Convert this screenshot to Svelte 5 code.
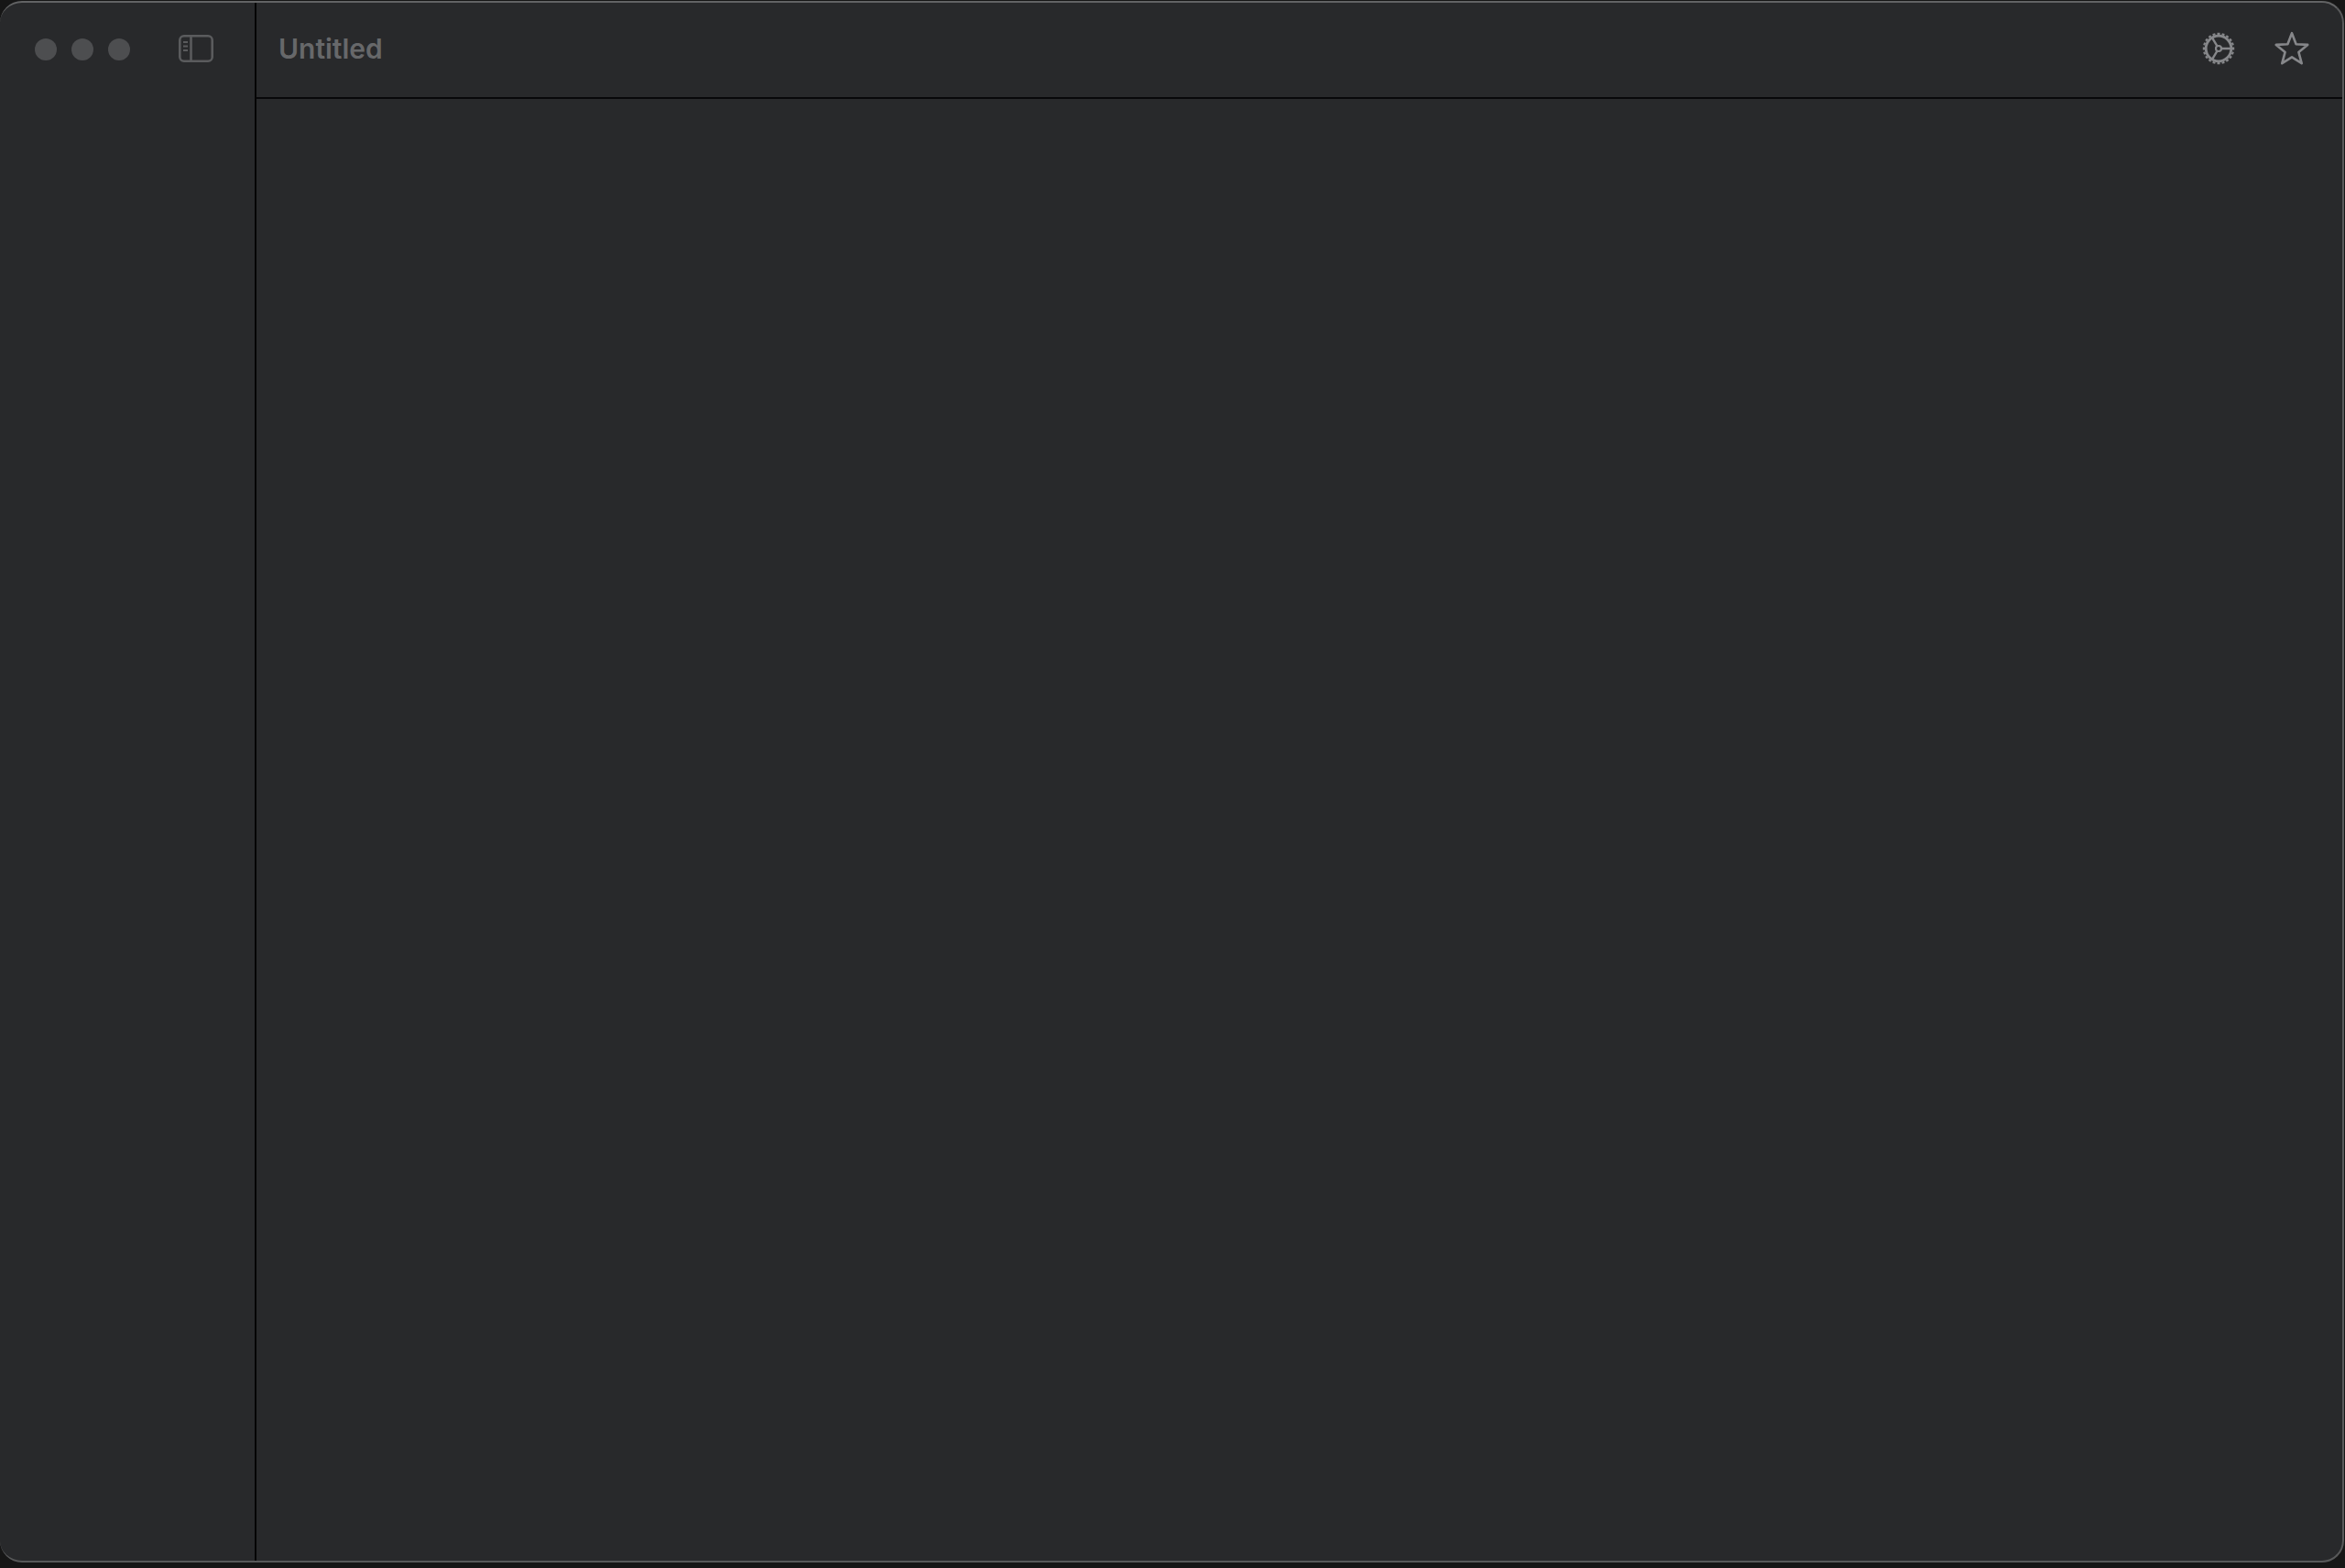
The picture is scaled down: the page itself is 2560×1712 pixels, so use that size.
<script lang="ts">
	const teeth = Array.from({ length: 20 }, (_, i) => i * 18);
</script>

<div class="window">
	<aside class="sidebar">
		<div class="lights">
			<span class="light"></span>
			<span class="light"></span>
			<span class="light"></span>
		</div>
		<svg class="toggle" width="38" height="30" viewBox="0 0 38 30" fill="none" stroke="#5a5b5d" aria-label="Toggle sidebar">
			<rect x="1.3" y="1.3" width="35.4" height="27.4" rx="4.5" stroke-width="2.6" />
			<path d="M13.5 2v26" stroke-width="2.6" />
			<path d="M5 8h5M5 12.5h5M5 17h5" stroke-width="2" />
		</svg>
	</aside>
	<main class="content">
		<header class="titlebar">
			<span class="title">Untitled</span>
			<div class="actions">
				<svg width="38" height="38" viewBox="0 0 38 38" fill="none" stroke="#86878a" aria-label="Settings">
					<circle cx="19" cy="19" r="13.8" stroke-width="2.8" />
					{#each teeth as angle}
						<path d="M19 4V1.8" stroke-width="3" transform="rotate({angle} 19 19)" />
					{/each}
					<circle cx="19" cy="19" r="3" stroke-width="2.2" />
					<path d="M22 19H33M17.5 16.4 11.6 6.6M17.5 21.6 11.6 31.4" stroke-width="2.4" />
				</svg>
				<svg width="38" height="38" viewBox="0 0 38 38" fill="none" stroke="#86878a" stroke-width="2.6" stroke-linejoin="round" aria-label="Favorite">
					<path d="M19 2.2 23.6 14.2 36.2 14.9 26.4 22.9 29.7 35.2 19 28.3 8.3 35.2 11.6 22.9 1.8 14.9 14.4 14.2Z" />
				</svg>
			</div>
		</header>
		<div class="body"></div>
	</main>
</div>

<style>
	:global(body) {
		margin: 0;
		background: #161616;
	}

	.window {
		box-sizing: border-box;
		display: flex;
		width: 2559px;
		height: 1705px;
		margin-top: 1px;
		overflow: hidden;
		background: #28292b;
		border-style: solid;
		border-color: #626364 #58595a #58595a;
		border-width: 2px 2px 2px 0;
		border-radius: 24px;
	}

	.sidebar {
		box-sizing: border-box;
		display: flex;
		flex: none;
		align-items: flex-start;
		width: 278px;
		height: 100%;
		padding: 35px 0 0 38px;
	}

	.lights {
		display: flex;
		gap: 16px;
		margin-top: 4px;
	}

	.light {
		width: 24px;
		height: 24px;
		border-radius: 50%;
		background: #4d4e50;
	}

	.toggle {
		margin-left: 53px;
	}

	.content {
		display: flex;
		flex: 1;
		flex-direction: column;
		min-width: 0;
		border-left: 2px solid #050505;
	}

	.titlebar {
		box-sizing: border-box;
		display: flex;
		flex: none;
		align-items: center;
		justify-content: space-between;
		height: 105px;
		padding: 0 36px 4px 24px;
		border-bottom: 2px solid #08080a;
	}

	.title {
		color: #67686a;
		font-family: Inter, "Liberation Sans", sans-serif;
		font-size: 30px;
		font-weight: 600;
	}

	.actions {
		display: flex;
		align-items: center;
		gap: 42px;
	}

	.body {
		flex: 1;
	}
</style>
